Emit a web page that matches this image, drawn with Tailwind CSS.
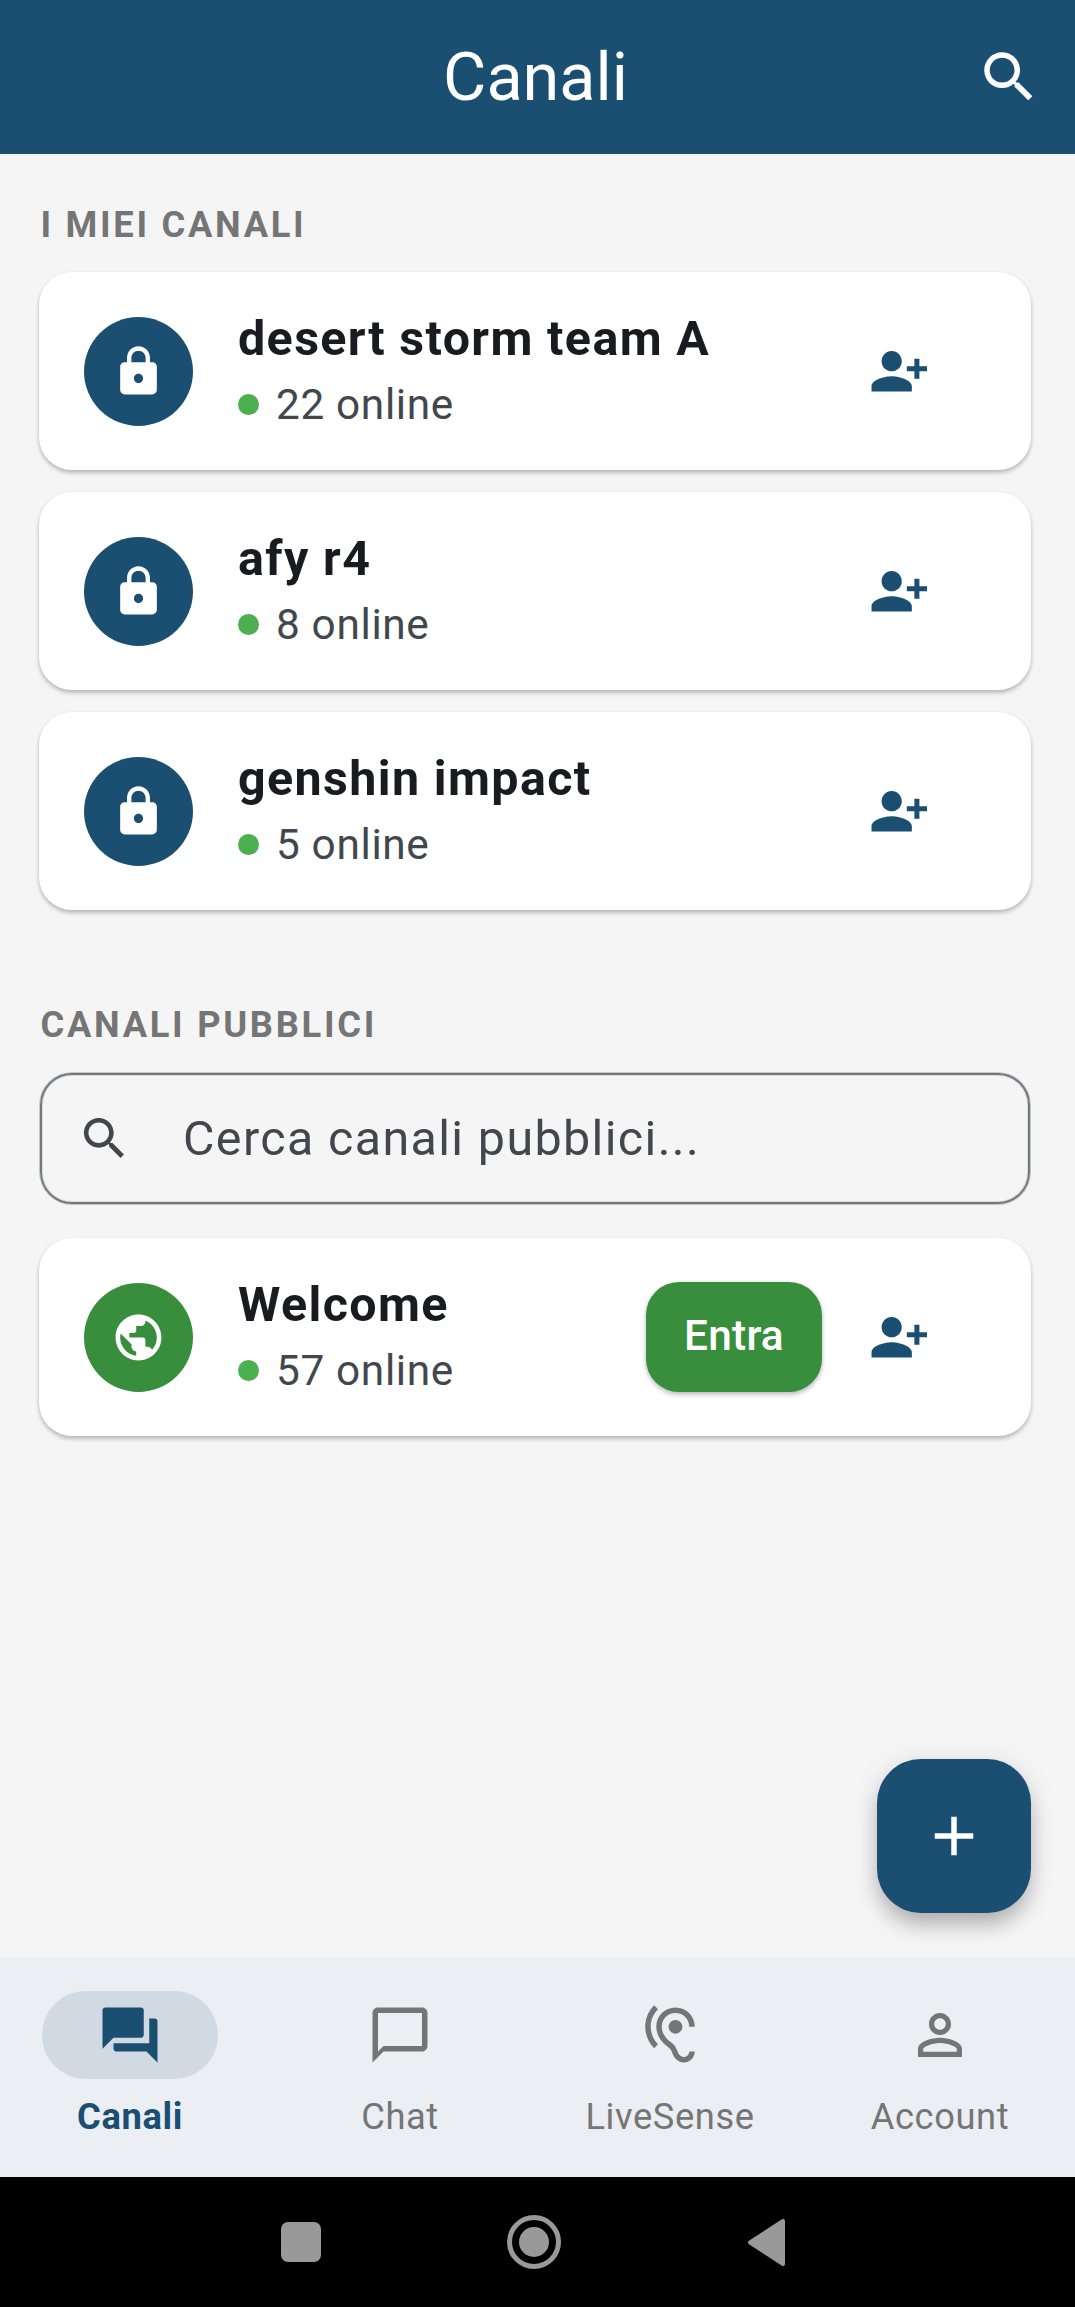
<!doctype html>
<html lang="it">

<head>
    <meta charset="UTF-8">
    <meta name="viewport" content="width=device-width, initial-scale=1.0">
    <title>Canali</title>
    <script src="https://cdn.jsdelivr.net/npm/@tailwindcss/browser@4"></script>
</head>

<body class="bg-[#f5f5f5] overflow-x-hidden font-[Roboto,sans-serif]">
    <!-- shared icons -->
    <svg class="hidden">
        <symbol id="search" viewBox="0 0 24 24">
            <path d="M15.5 14h-.79l-.28-.27C15.41 12.59 16 11.11 16 9.5 16 5.91 13.09 3 9.5 3S3 5.91 3 9.5 5.91 16 9.5 16c1.61 0 3.09-.59 4.23-1.57l.27.28v.79l5 4.99L20.49 19l-4.99-5zm-6 0C7.01 14 5 11.99 5 9.5S7.01 5 9.5 5 14 7.01 14 9.5 11.99 14 9.5 14z" />
        </symbol>
        <symbol id="lock" viewBox="0 0 24 24">
            <path d="M18 8h-1V6c0-2.76-2.24-5-5-5S7 3.24 7 6v2H6c-1.1 0-2 .9-2 2v10c0 1.1.9 2 2 2h12c1.1 0 2-.9 2-2V10c0-1.1-.9-2-2-2zm-6 9c-1.1 0-2-.9-2-2s.9-2 2-2 2 .9 2 2-.9 2-2 2zm3.1-9H8.9V6c0-1.71 1.39-3.1 3.1-3.1 1.71 0 3.1 1.39 3.1 3.1v2z" />
        </symbol>
        <symbol id="person-add" viewBox="0 0 24 24">
            <path d="M13 8c0-2.21-1.79-4-4-4S5 5.79 5 8s1.79 4 4 4 4-1.79 4-4zm2 2v2h3v3h2v-3h3v-2h-3V7h-2v3h-3zM1 18v2h16v-2c0-2.66-5.33-4-8-4s-8 1.34-8 4z" />
        </symbol>
    </svg>

    <div class="w-[1080px] h-[2307px] -ml-[5px] flex flex-col">
        <header class="h-[154px] bg-[#1b4f72] text-white grid grid-cols-[132px_1fr_132px] items-center">
            <span></span>
            <h1 class="pl-px text-center text-[66.55px] leading-[80px]">Canali</h1>
            <button class="flex justify-center">
                <svg class="size-[66px]" fill="currentColor"><use href="#search" /></svg>
            </button>
        </header>

        <main class="relative flex-1 px-[44px] pt-[49px]">
            <h2 class="pl-[1.5px] mb-[25px] text-[36.3px] leading-[44px] font-bold tracking-[2.7px] text-[#757575]">I MIEI CANALI</h2>

            <div class="flex flex-col gap-[22px]">
                <div class="h-[198px] flex items-center bg-white rounded-[33px] pl-[44.5px] pr-[66px] shadow-[0_3px_4px_rgba(0,0,0,0.22),0_1px_4px_rgba(0,0,0,0.06)]">
                    <div class="size-[109px] rounded-full bg-[#1b4f72] text-white flex items-center justify-center">
                        <svg class="size-[55px]" fill="currentColor"><use href="#lock" /></svg>
                    </div>
                    <div class="ml-[45.5px] flex-1">
                        <h3 class="text-[48.4px] leading-[67px] font-bold tracking-[1.375px] text-[#181c20]">desert storm team A</h3>
                        <p class="flex items-center text-[42.35px] leading-[65px] tracking-[0.65px] text-[#42474e]">
                            <span class="size-[21px] rounded-full bg-[#4caf50] mr-[17px]"></span>22 online
                        </p>
                    </div>
                    <button class="w-[132px] flex justify-center text-[#1b4f72]">
                        <svg class="size-[60.5px]" fill="currentColor"><use href="#person-add" /></svg>
                    </button>
                </div>

                <div class="h-[198px] flex items-center bg-white rounded-[33px] pl-[44.5px] pr-[66px] shadow-[0_3px_4px_rgba(0,0,0,0.22),0_1px_4px_rgba(0,0,0,0.06)]">
                    <div class="size-[109px] rounded-full bg-[#1b4f72] text-white flex items-center justify-center">
                        <svg class="size-[55px]" fill="currentColor"><use href="#lock" /></svg>
                    </div>
                    <div class="ml-[45.5px] flex-1">
                        <h3 class="text-[48.4px] leading-[67px] font-bold tracking-[1.375px] text-[#181c20]">afy r4</h3>
                        <p class="flex items-center text-[42.35px] leading-[65px] tracking-[0.65px] text-[#42474e]">
                            <span class="size-[21px] rounded-full bg-[#4caf50] mr-[17px]"></span>8 online
                        </p>
                    </div>
                    <button class="w-[132px] flex justify-center text-[#1b4f72]">
                        <svg class="size-[60.5px]" fill="currentColor"><use href="#person-add" /></svg>
                    </button>
                </div>

                <div class="h-[198px] flex items-center bg-white rounded-[33px] pl-[44.5px] pr-[66px] shadow-[0_3px_4px_rgba(0,0,0,0.22),0_1px_4px_rgba(0,0,0,0.06)]">
                    <div class="size-[109px] rounded-full bg-[#1b4f72] text-white flex items-center justify-center">
                        <svg class="size-[55px]" fill="currentColor"><use href="#lock" /></svg>
                    </div>
                    <div class="ml-[45.5px] flex-1">
                        <h3 class="text-[48.4px] leading-[67px] font-bold tracking-[1.375px] text-[#181c20]">genshin impact</h3>
                        <p class="flex items-center text-[42.35px] leading-[65px] tracking-[0.65px] text-[#42474e]">
                            <span class="size-[21px] rounded-full bg-[#4caf50] mr-[17px]"></span>5 online
                        </p>
                    </div>
                    <button class="w-[132px] flex justify-center text-[#1b4f72]">
                        <svg class="size-[60.5px]" fill="currentColor"><use href="#person-add" /></svg>
                    </button>
                </div>
            </div>

            <h2 class="pl-[1.5px] mt-[93px] mb-[26px] text-[36.3px] leading-[44px] font-bold tracking-[2.7px] text-[#757575]">CANALI PUBBLICI</h2>

            <div class="h-[131px] mx-px mb-[34px] flex items-center rounded-[32px] border-2 border-[#72777f] shadow-[0_0_0_1px_#72777f60,inset_0_0_0_1px_#72777f30] pl-[35px] text-[#42474e]">
                <svg class="size-[55px]" fill="currentColor"><use href="#search" /></svg>
                <span class="ml-[51px] text-[48.4px] leading-[60px] tracking-[1.375px]">Cerca canali pubblici...</span>
            </div>

            <div class="h-[198px] flex items-center bg-white rounded-[33px] pl-[44.5px] pr-[66px] shadow-[0_3px_4px_rgba(0,0,0,0.22),0_1px_4px_rgba(0,0,0,0.06)]">
                <div class="size-[109px] rounded-full bg-[#388e3c] text-white flex items-center justify-center">
                    <svg class="size-[55px]" viewBox="0 0 24 24" fill="currentColor">
                        <path d="M12 2C6.48 2 2 6.48 2 12s4.48 10 10 10 10-4.48 10-10S17.52 2 12 2zm-1 17.93c-3.95-.49-7-3.85-7-7.93 0-.62.08-1.21.21-1.79L9 15v1c0 1.1.9 2 2 2v1.93zm6.9-2.54c-.26-.81-1-1.39-1.9-1.39h-1v-3c0-.55-.45-1-1-1H8v-2h2c.55 0 1-.45 1-1V7h2c1.1 0 2-.9 2-2v-.41c2.93 1.19 5 4.06 5 7.41 0 2.08-.8 3.97-2.1 5.39z" />
                    </svg>
                </div>
                <div class="ml-[45.5px] flex-1">
                    <h3 class="text-[48.4px] leading-[67px] font-bold tracking-[1.375px] text-[#181c20]">Welcome</h3>
                    <p class="flex items-center text-[42.35px] leading-[65px] tracking-[0.65px] text-[#42474e]">
                        <span class="size-[21px] rounded-full bg-[#4caf50] mr-[17px]"></span>57 online
                    </p>
                </div>
                <button class="w-[176px] h-[110px] pb-0.5 mr-[11px] rounded-[33px] bg-[#388e3c] text-white text-[42.35px] leading-[50px] font-medium tracking-[0.25px] shadow-[0_3px_5px_rgba(0,0,0,0.22),0_0_4px_rgba(0,0,0,0.1)]">Entra</button>
                <button class="w-[132px] flex justify-center text-[#1b4f72]">
                    <svg class="size-[60.5px]" fill="currentColor"><use href="#person-add" /></svg>
                </button>
            </div>

            <!-- floating action button -->
            <button class="absolute right-[44px] bottom-[44px] size-[154px] rounded-[44px] bg-[#1b4f72] text-white flex items-center justify-center shadow-[0_14px_22px_-3px_rgba(0,0,0,0.26),0_2px_28px_rgba(0,0,0,0.09)]">
                <svg class="size-[66px]" viewBox="0 0 24 24" fill="currentColor">
                    <path d="M19 13h-6v6h-2v-6H5v-2h6V5h2v6h6v2z" />
                </svg>
            </button>
        </main>

        <nav class="relative h-[220px] pt-[34px] grid grid-cols-4 bg-[#ebeef3] text-[#757575] text-[36.3px] leading-[44px] tracking-[0.6px]">
            <a class="flex flex-col items-center gap-4 text-[#1b4f72] font-bold">
                <span class="w-[176px] h-[88px] rounded-full bg-[#d1d9e3] flex items-center justify-center">
                    <svg class="size-[66px]" viewBox="0 0 24 24" fill="currentColor">
                        <path d="M21 6h-2v9H6v2c0 .55.45 1 1 1h11l4 4V7c0-.55-.45-1-1-1zm-4 6V3c0-.55-.45-1-1-1H3c-.55 0-1 .45-1 1v14l4-4h10c.55 0 1-.45 1-1z" />
                    </svg>
                </span>
                Canali
            </a>
            <a class="flex flex-col items-center gap-4">
                <span class="w-[176px] h-[88px] flex items-center justify-center">
                    <svg class="size-[66px]" viewBox="0 0 24 24" fill="currentColor">
                        <path d="M20 2H4c-1.1 0-2 .9-2 2v18l4-4h14c1.1 0 2-.9 2-2V4c0-1.1-.9-2-2-2zm0 14H6l-2 2V4h16v12z" />
                    </svg>
                </span>
                Chat
            </a>
            <a class="flex flex-col items-center gap-4">
                <span class="w-[176px] h-[88px] flex items-center justify-center">
                    <svg class="size-[66px]" viewBox="0 0 24 24" fill="currentColor">
                        <path d="M17 20c-.29 0-.56-.06-.76-.15-.71-.37-1.21-.88-1.71-2.38-.51-1.56-1.47-2.29-2.39-3-.79-.61-1.61-1.24-2.32-2.53C9.29 10.98 9 9.93 9 9c0-2.8 2.2-5 5-5s5 2.2 5 5h2c0-3.93-3.07-7-7-7S7 5.07 7 9c0 1.26.38 2.65 1.07 3.9.91 1.65 1.98 2.48 2.85 3.15.81.62 1.39 1.07 1.71 2.05.6 1.82 1.37 2.84 2.73 3.55.51.23 1.07.35 1.64.35 2.21 0 4-1.79 4-4h-2c0 1.1-.9 2-2 2zM7.64 2.64L6.22 1.22C4.23 3.21 3 5.96 3 9s1.23 5.79 3.22 7.78l1.41-1.41C6.01 13.74 5 11.49 5 9s1.01-4.74 2.64-6.36zM11.5 9c0 1.38 1.12 2.5 2.5 2.5s2.5-1.12 2.5-2.5-1.12-2.5-2.5-2.5-2.5 1.12-2.5 2.5z" />
                    </svg>
                </span>
                LiveSense
            </a>
            <a class="flex flex-col items-center gap-4">
                <span class="w-[176px] h-[88px] flex items-center justify-center">
                    <svg class="size-[66px]" viewBox="0 0 24 24" fill="currentColor">
                        <path d="M12 5.9c1.16 0 2.1.94 2.1 2.1s-.94 2.1-2.1 2.1S9.9 9.16 9.9 8s.94-2.1 2.1-2.1m0 9c2.97 0 6.1 1.46 6.1 2.1v1.1H5.9V17c0-.64 3.13-2.1 6.1-2.1M12 4C9.79 4 8 5.79 8 8s1.79 4 4 4 4-1.79 4-4-1.79-4-4-4zm0 9c-2.67 0-8 1.34-8 4v3h16v-3c0-2.66-5.33-4-8-4z" />
                    </svg>
                </span>
                Account
            </a>
        </nav>

        <!-- system navigation -->
        <div class="h-[130px] bg-black flex items-center justify-between pl-[286px] pr-[290px]">
            <span class="size-10 rounded-[7px] bg-[#999999]"></span>
            <span class="size-[54px] mr-0.5 rounded-full border-[5px] border-[#999999] flex items-center justify-center">
                <span class="size-[30px] rounded-full bg-[#999999]"></span>
            </span>
            <svg class="w-[37px] h-[47px]" viewBox="0 0 37 47" fill="#999999" stroke="#999999" stroke-width="4" stroke-linejoin="round">
                <path d="M2 23.5L35 2v43z" />
            </svg>
        </div>
    </div>
</body>

</html>
